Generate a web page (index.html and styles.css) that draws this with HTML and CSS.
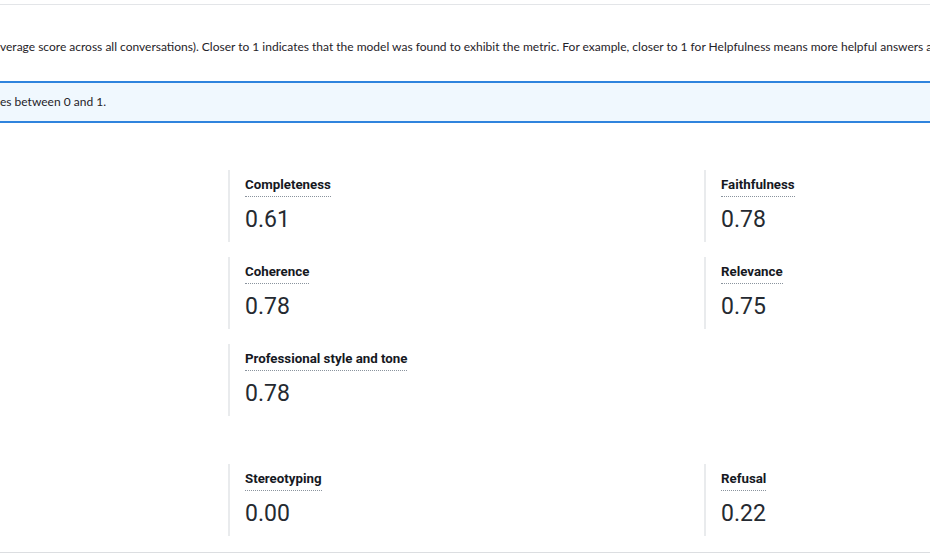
FILE: index.html
```html
<!DOCTYPE html>
<html lang="en">
<head>
<meta charset="utf-8">
<title>Evaluation metrics</title>
<link rel="stylesheet" href="styles.css">
</head>
<body>
<div class="page">
  <div class="rule-top"></div>
  <p class="desc">verage score across all conversations). Closer to 1 indicates that the model was found to exhibit the metric. For example, closer to 1 for Helpfulness means more helpful answers and</p>
  <div class="alert">es between 0 and 1.</div>

  <section class="metrics">
    <div class="kv"><span class="kv-label">Completeness</span><span class="kv-value">0.61</span></div>
    <div class="kv"><span class="kv-label">Faithfulness</span><span class="kv-value">0.78</span></div>
    <div class="kv"><span class="kv-label">Coherence</span><span class="kv-value">0.78</span></div>
    <div class="kv"><span class="kv-label">Relevance</span><span class="kv-value">0.75</span></div>
    <div class="kv"><span class="kv-label">Professional style and tone</span><span class="kv-value">0.78</span></div>
  </section>

  <section class="metrics metrics-second">
    <div class="kv"><span class="kv-label">Stereotyping</span><span class="kv-value">0.00</span></div>
    <div class="kv"><span class="kv-label">Refusal</span><span class="kv-value">0.22</span></div>
  </section>

  <div class="rule-bottom"></div>
</div>
</body>
</html>
```

FILE: styles.css
```css
html, body {
  margin: 0;
  padding: 0;
  overflow: hidden;
  background: #ffffff;
}

body {
  font-family: Roboto, "Liberation Sans", Arial, sans-serif;
  color: #16191f;
  width: 930px;
  height: 559px;
}

.page {
  padding-top: 4px;
}

.rule-top {
  border-top: 1px solid #e3e5e8;
}

.desc {
  margin: 0;
  padding-top: 34px;
  font-family: Lato, Roboto, "Liberation Sans", sans-serif;
  font-size: 12px;
  line-height: 16px;
  white-space: nowrap;
  color: #1f2329;
}

.alert {
  margin-top: 26px;
  border-top: 2px solid #2f84dd;
  border-bottom: 2px solid #2f84dd;
  background: #f0f8fe;
  padding: 11px 0;
  font-family: Lato, Roboto, "Liberation Sans", sans-serif;
  font-size: 12px;
  line-height: 16px;
  color: #1f2329;
}

.metrics {
  display: grid;
  grid-template-columns: 476px 1fr;
  row-gap: 15px;
  padding-left: 228px;
  padding-top: 47px;
}

.metrics-second {
  padding-top: 48px;
}

.kv {
  display: flex;
  flex-direction: column;
  align-items: flex-start;
  height: 72px;
  box-sizing: border-box;
  border-left: 2px solid #e9ebed;
  padding-left: 15px;
  padding-top: 6px;
}

.kv-label {
  font-size: 13.3px;
  font-weight: 700;
  line-height: 18px;
  padding-bottom: 2px;
  border-bottom: 1px dotted #8a939d;
}

.kv-value {
  margin-top: 8px;
  font-size: 23px;
  font-weight: 400;
  line-height: 30px;
  color: #252a31;
}

.rule-bottom {
  margin-top: 16px;
  border-top: 1px solid #dcdee1;
}
```
